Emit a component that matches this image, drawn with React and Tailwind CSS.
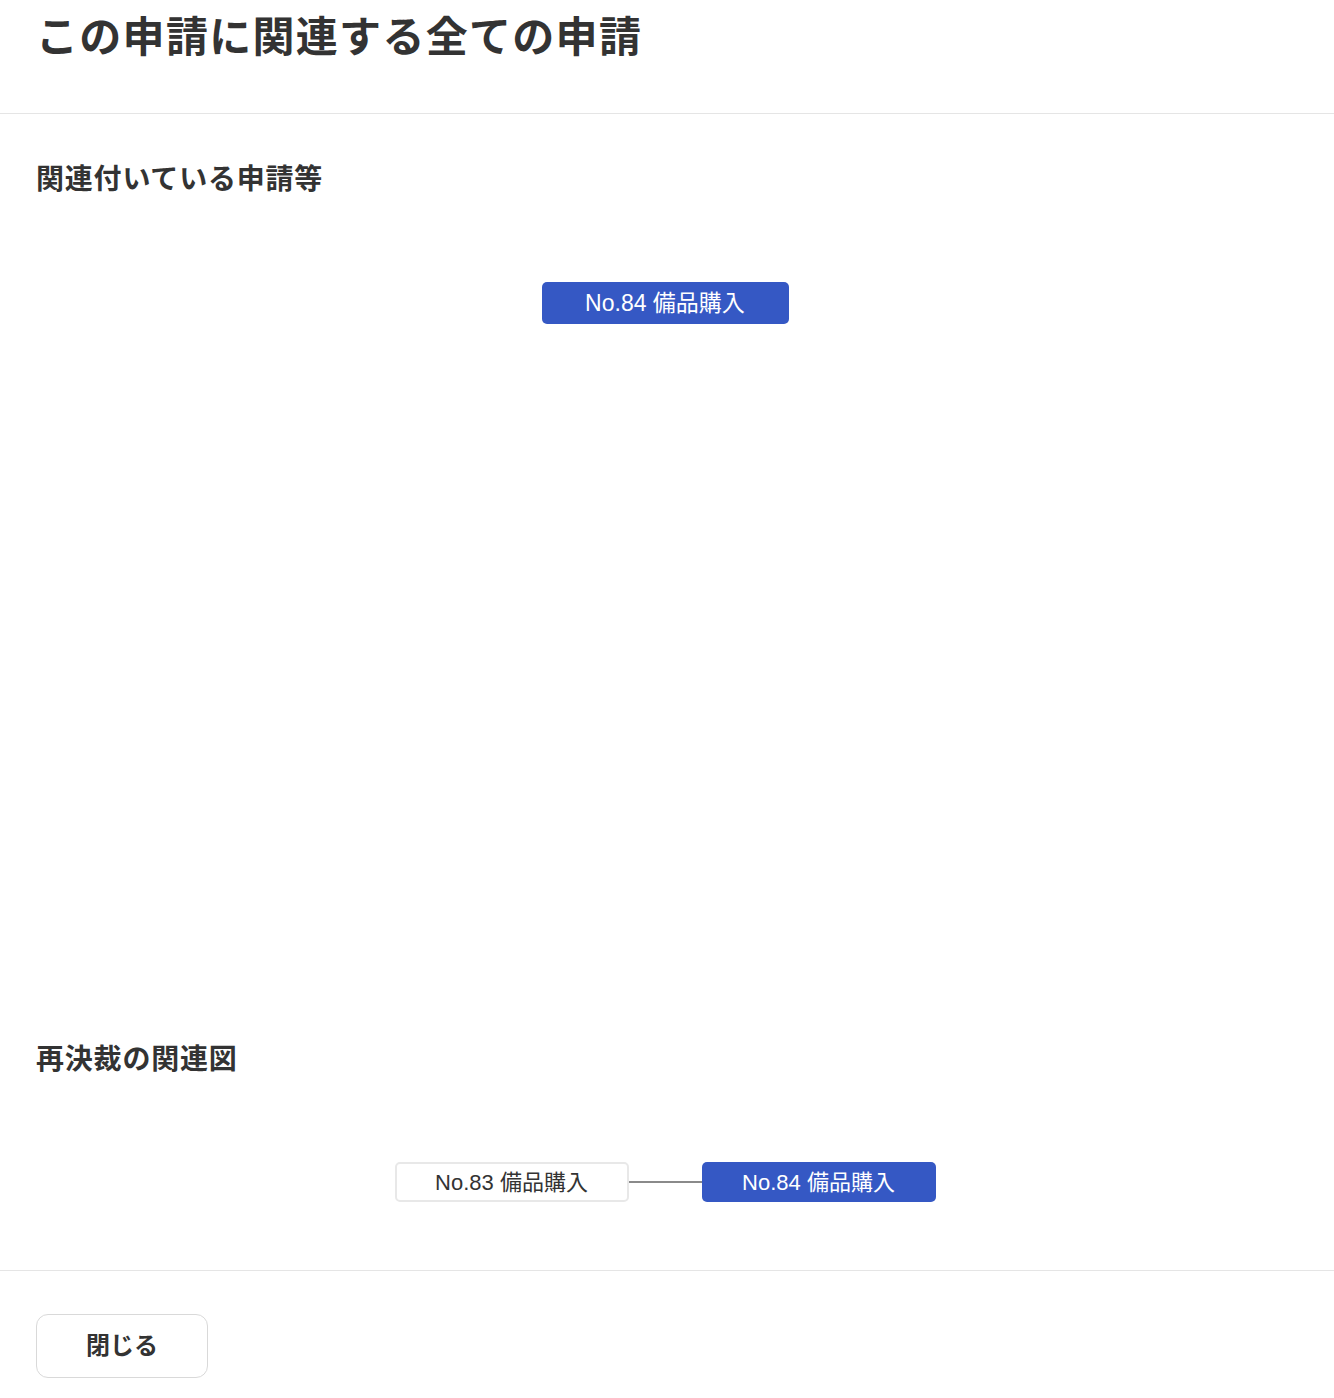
import React from "react";

const jp = {
  fontFamily:
    '"Liberation Sans", "Noto Sans CJK JP", "Noto Sans", sans-serif',
};

const Node = ({ label, active, big }) => (
  <div
    className={
      active
        ? big
          ? "flex h-[42px] w-[247px] items-center justify-center rounded-[5px] bg-[#3558c4] text-[23px] text-white"
          : "flex h-[40px] w-[234px] items-center justify-center rounded-[5px] bg-[#3558c4] text-[22px] text-white"
        : "flex h-[40px] w-[234px] items-center justify-center rounded-[5px] border-2 border-[#e8e8e8] bg-white text-[22px] text-[#333333]"
    }
  >
    {label}
  </div>
);

const App = () => {
  return (
    <div className="flex min-h-[1398px] flex-col bg-white text-[#333333]" style={jp}>
      {/* header */}
      <header className="h-[114px] border-b border-[#e5e5e5] pl-[36px] pr-10 pt-[6px]">
        <h1 className="text-[42px] font-bold leading-[63px] tracking-[1.3px]">
          この申請に関連する全ての申請
        </h1>
      </header>

      {/* linked requests */}
      <section className="pl-[36px] pr-[40px] pt-[46px]">
        <h2 className="text-[28px] font-bold leading-[40px] tracking-[0.8px]">関連付いている申請等</h2>
        <div className="flex h-[840px] justify-center pt-[82px]">
          <Node label="No.84 備品購入" active big />
        </div>
      </section>

      {/* re-approval graph */}
      <section className="h-[231px] border-b border-[#e5e5e5] pl-[36px] pr-[40px]">
        <h2 className="text-[28px] font-bold leading-[40px] tracking-[0.8px]">再決裁の関連図</h2>
        <div className="flex items-center justify-center pt-[82px]">
          <Node label="No.83 備品購入" />
          <div className="h-[2px] w-[73px] bg-[#8a8a8a]" />
          <Node label="No.84 備品購入" active />
        </div>
      </section>

      {/* footer */}
      <footer className="px-[36px] pt-[43px]">
        <button className="h-[64px] w-[172px] rounded-[12px] border border-[#d9d9d9] bg-white text-[24px] font-bold text-[#333333]">
          閉じる
        </button>
      </footer>
    </div>
  );
};

export default App;
